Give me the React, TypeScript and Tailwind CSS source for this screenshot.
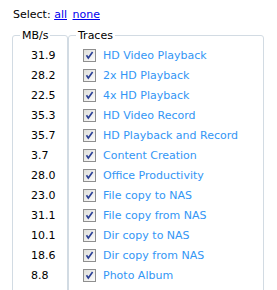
import React from "react";

const rows: [string, string][] = [
  ["31.9", "HD Video Playback"],
  ["28.2", "2x HD Playback"],
  ["22.5", "4x HD Playback"],
  ["35.3", "HD Video Record"],
  ["35.7", "HD Playback and Record"],
  ["3.7", "Content Creation"],
  ["28.0", "Office Productivity"],
  ["23.0", "File copy to NAS"],
  ["31.1", "File copy from NAS"],
  ["10.1", "Dir copy to NAS"],
  ["18.6", "Dir copy from NAS"],
  ["8.8", "Photo Album"],
];

function Check() {
  return (
    <svg width="13" height="13" viewBox="0 0 13 13" className="block shrink-0">
      <defs>
        <linearGradient id="cbg" x1="0" y1="0" x2="1" y2="1">
          <stop offset="0" stopColor="#dcdcd7" />
          <stop offset="1" stopColor="#ffffff" />
        </linearGradient>
      </defs>
      <rect x="0.5" y="0.5" width="12" height="12" fill="url(#cbg)" stroke="#8f8f8f" />
      <path d="M3.5 6.2 L5.3 9 L9.6 3" fill="none" stroke="#2a3f95" strokeWidth="1.6" />
    </svg>
  );
}

export default function App() {
  return (
    <div
      className="w-[277px] h-[290px] overflow-hidden bg-white text-[11px] leading-[13px]"
      style={{ fontFamily: '"DejaVu Sans", Verdana, sans-serif' }}
    >
      <div className="pl-[13px] pt-[8px] text-black">
        Select: <a className="text-[#0000ee] underline">all</a>{" "}
        <a className="text-[#0000ee] underline ml-[2px]">none</a>
      </div>
      <div className="flex pl-[12px] mt-[8px]">
        <fieldset className="w-[56px] h-[300px] border border-[#d2dbe3] rounded-[3px] px-0">
          <legend className="ml-[7px] px-[2px] text-black leading-[13px]">MB/s</legend>
          <div className="flex flex-col pt-[3px] pl-[18px]">
            {rows.map(([n]) => (
              <div key={n + "x"} className="h-[20px] flex items-center text-black">
                {n}
              </div>
            ))}
          </div>
        </fieldset>
        <fieldset className="w-[196px] h-[300px] border border-[#d2dbe3] rounded-[3px]">
          <legend className="ml-[7px] px-[2px] text-black leading-[13px]">Traces</legend>
          <div className="flex flex-col pt-[3px] pl-[14px]">
            {rows.map(([n, t]) => (
              <div key={t} className="h-[20px] flex items-center gap-[7px] text-[#3396f5]">
                <Check />
                <span>{t}</span>
              </div>
            ))}
          </div>
        </fieldset>
      </div>
    </div>
  );
}
